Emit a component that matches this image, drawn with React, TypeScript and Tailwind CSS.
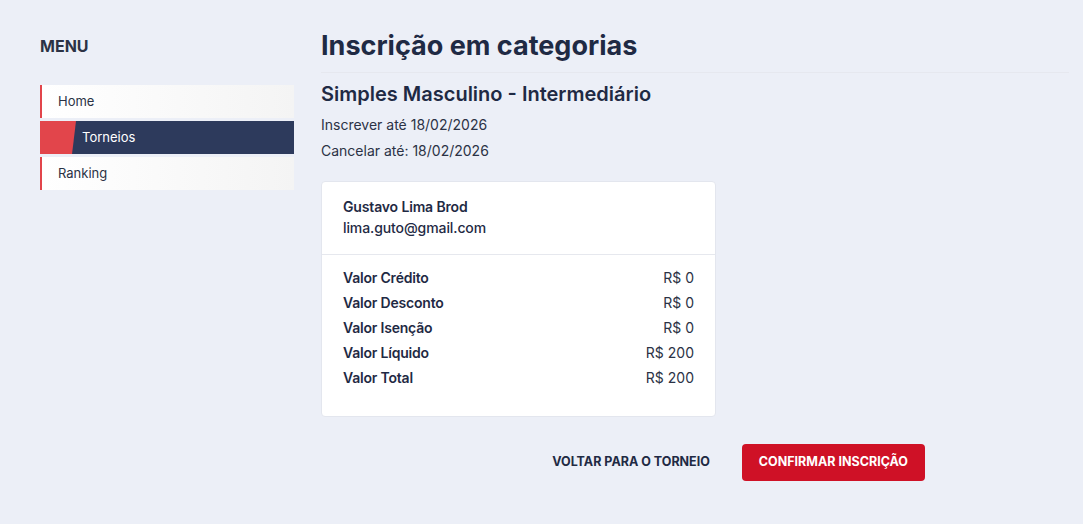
import React from 'react'

const menu = [
  { label: 'Home', active: false },
  { label: 'Torneios', active: true },
  { label: 'Ranking', active: false },
]

const valores = [
  { label: 'Valor Crédito', value: 'R$ 0' },
  { label: 'Valor Desconto', value: 'R$ 0' },
  { label: 'Valor Isenção', value: 'R$ 0' },
  { label: 'Valor Líquido', value: 'R$ 200' },
  { label: 'Valor Total', value: 'R$ 200' },
]

export default function App() {
  return (
    <div className="min-h-[524px] bg-[#eceff7] text-[#1f2a44] font-['Inter',sans-serif] flex pl-[40px] pr-[14px] pt-[36px]">
      {/* sidebar */}
      <aside className="w-[254px] shrink-0">
        <h3 className="text-[16px] font-bold text-[#2b3245] leading-[20px]">MENU</h3>
        <nav className="mt-[29px] flex flex-col gap-[3px]">
          {menu.map((item) =>
            item.active ? (
              <div key={item.label} className="relative h-[33px] bg-[#2d3a5c] flex items-center overflow-hidden">
                <div className="absolute left-0 top-0 h-full w-[36px] bg-[#e2454b] [clip-path:polygon(0_0,100%_0,89%_100%,0_100%)]" />
                <span className="pl-[42px] text-[13px] text-white">{item.label}</span>
              </div>
            ) : (
              <div
                key={item.label}
                className="h-[33px] border-l-2 border-[#e2454b] bg-gradient-to-r from-white to-[#f4f4f4] flex items-center pl-[16px] text-[13px] text-[#2b3245]"
              >
                {item.label}
              </div>
            )
          )}
        </nav>
      </aside>

      {/* main */}
      <main className="flex-1 ml-[27px]">
        <h1 className="text-[27px] font-bold leading-[20px] text-[#1f2a44] mt-0">Inscrição em categorias</h1>
        <hr className="mt-[16px] border-0 border-t border-[#e6e8ef]" />
        <h2 className="mt-[9px] text-[20px] font-semibold leading-[24px]">Simples Masculino - Intermediário</h2>
        <p className="mt-[6px] text-[14px] leading-[26px] text-[#2b3245]">Inscrever até 18/02/2026</p>
        <p className="text-[14px] leading-[26px] text-[#2b3245]">Cancelar até: 18/02/2026</p>

        <div className="mt-[17px] w-[395px] bg-white rounded-[4px] border border-[#e3e6ee]">
          <div className="px-[21px] pt-[14px] pb-[16px] border-b border-[#e6e8ee]">
            <div className="text-[14px] font-semibold leading-[21px] tracking-[-0.15px]">Gustavo Lima Brod</div>
            <div className="text-[14px] font-medium leading-[21px] tracking-[-0.1px]">lima.guto@gmail.com</div>
          </div>
          <div className="px-[21px] pt-[10px] pb-[26px] flex flex-col">
            {valores.map((v) => (
              <div key={v.label} className="flex justify-between h-[25px] items-center text-[14px]">
                <span className="font-semibold tracking-[-0.2px]">{v.label}</span>
                <span className="text-[#2b3245]">{v.value}</span>
              </div>
            ))}
          </div>
        </div>

        <div className="w-[604px] mt-[27px] flex justify-end items-center gap-[32px]">
          <button className="text-[12.5px] font-bold text-[#1f2a44] uppercase">Voltar para o torneio</button>
          <button className="h-[37px] px-[17px] rounded-[4px] bg-[#cf1126] text-white text-[12.5px] font-bold uppercase">
            Confirmar inscrição
          </button>
        </div>
      </main>
    </div>
  )
}
